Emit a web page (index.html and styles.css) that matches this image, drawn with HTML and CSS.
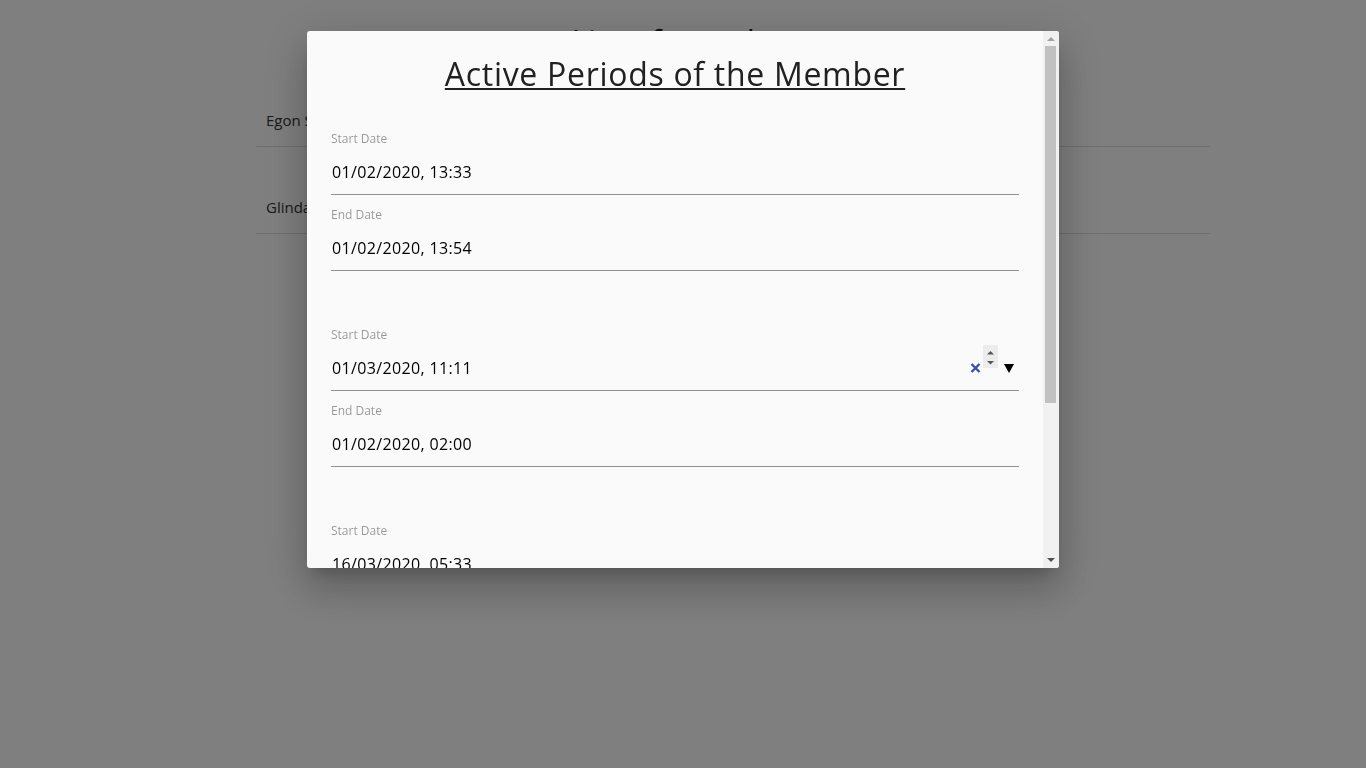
FILE: index.html
```html
<!DOCTYPE html>
<html lang="en">
<head>
<meta charset="utf-8">
<title>Active Periods of the Member</title>
<link rel="stylesheet" href="styles.css">
</head>
<body>
<div class="page">
  <h1 class="page-title">List of members</h1>
  <ul class="member-list">
    <li class="member-row">Egon Spengler</li>
    <li class="member-row">Glinda Southgood</li>
  </ul>
</div>

<div class="overlay">
  <div class="dialog">
    <div class="dialog-body">
      <h2 class="dialog-title">Active Periods of the Member</h2>

      <div class="period">
        <div class="field">
          <div class="field-label">Start Date</div>
          <div class="field-input"><span class="value">01/02/2020, 13:33</span></div>
        </div>
        <div class="field">
          <div class="field-label">End Date</div>
          <div class="field-input"><span class="value">01/02/2020, 13:54</span></div>
        </div>
      </div>

      <div class="period">
        <div class="field">
          <div class="field-label">Start Date</div>
          <div class="field-input">
            <span class="value">01/03/2020, 11:11</span>
            <svg class="clear-icon" width="11" height="10" viewBox="0 0 11 10"><path d="M1.5 1 L9.5 9 M9.5 1 L1.5 9" stroke="#3b4fa6" stroke-width="2.4" fill="none"/></svg>
            <span class="spin">
              <svg width="15" height="23" viewBox="0 0 15 23"><path d="M4 9.5 L7.5 6 L11 9.5 Z" fill="#555"/><path d="M4 16 L11 16 L7.5 19.5 Z" fill="#555"/></svg>
            </span>
            <svg class="drop-icon" width="10" height="9" viewBox="0 0 10 9"><path d="M0 0 L10 0 L5 9 Z" fill="#000"/></svg>
          </div>
        </div>
        <div class="field">
          <div class="field-label">End Date</div>
          <div class="field-input"><span class="value">01/02/2020, 02:00</span></div>
        </div>
      </div>

      <div class="period">
        <div class="field">
          <div class="field-label">Start Date</div>
          <div class="field-input"><span class="value">16/03/2020, 05:33</span></div>
        </div>
        <div class="field">
          <div class="field-label">End Date</div>
          <div class="field-input"><span class="value">16/03/2020, 08:15</span></div>
        </div>
      </div>
    </div>

    <div class="scrollbar" aria-hidden="true">
      <div class="sb-btn">
        <svg width="16" height="15" viewBox="0 0 16 15"><path d="M4 10 L8 6 L12 10 Z" fill="#a3a3a3"/></svg>
      </div>
      <div class="sb-track"><div class="sb-thumb"></div></div>
      <div class="sb-btn">
        <svg width="16" height="15" viewBox="0 0 16 15"><path d="M4 5 L12 5 L8 9 Z" fill="#505050"/></svg>
      </div>
    </div>
  </div>
</div>
</body>
</html>
```

FILE: styles.css
```css
html, body {
  margin: 0;
  padding: 0;
}
body {
  background: #ffffff;
  font-family: "Open Sans", "Noto Sans", sans-serif;
  color: #333;
  width: 1366px;
  height: 768px;
  overflow: hidden;
}

.page-title {
  margin: 0;
  padding: 22px 0 0 18px;
  height: 38px;
  line-height: 40px;
  font-size: 32px;
  font-weight: 400;
  text-align: center;
  color: #222;
}
.member-list {
  list-style: none;
  margin: 0 0 0 256px;
  padding: 0;
  width: 954px;
}
.member-row {
  padding: 51px 10px 17px;
  line-height: 18px;
  font-size: 15px;
  color: #333;
  border-bottom: 1px solid #dddddd;
}

.overlay {
  position: fixed;
  inset: 0;
  background: rgba(0, 0, 0, 0.5);
  display: flex;
  justify-content: center;
  align-items: flex-start;
  padding-top: 31px;
}

.dialog {
  width: 752px;
  height: 537px;
  background: #fafafa;
  border-radius: 3px;
  overflow: hidden;
  display: flex;
  box-shadow: 0 11px 15px -7px rgba(0,0,0,.2), 0 24px 38px 3px rgba(0,0,0,.14), 0 9px 46px 8px rgba(0,0,0,.12);
}

.dialog-body {
  flex: 1;
  min-width: 0;
  overflow: hidden;
  padding: 23px 24px 0;
}

.scrollbar {
  width: 16px;
  flex: none;
  background: #f1f1f1;
  display: flex;
  flex-direction: column;
}
.sb-btn {
  height: 15px;
  flex: none;
}
.sb-btn svg {
  display: block;
}
.sb-track {
  flex: 1;
  padding: 0 3px 0 2px;
}
.sb-thumb {
  height: 357px;
  background: #c1c1c1;
}

.dialog-title {
  margin: 0 0 36px;
  line-height: 40px;
  height: 40px;
  font-size: 32px;
  font-weight: 400;
  text-align: center;
  color: #212121;
  letter-spacing: 0.7px;
  text-decoration: underline;
  text-decoration-thickness: 2px;
  text-underline-offset: 2px;
}

.period {
  margin-bottom: 55px;
}

.field {
  margin-bottom: 11px;
}
.field-label {
  font-size: 12px;
  line-height: 16px;
  height: 15px;
  padding-top: 1px;
  color: rgba(0, 0, 0, 0.4);
}
.field-input {
  margin-top: 6px;
  padding: 8px 5px 10px 1px;
  line-height: 24px;
  height: 24px;
  font-size: 16px;
  letter-spacing: 0.35px;
  color: #000;
  border-bottom: 1px solid rgba(0, 0, 0, 0.42);
  display: flex;
  align-items: center;
}
.value {
  flex: 1;
}
.clear-icon {
  display: block;
  margin-right: 2px;
}
.spin {
  align-self: flex-start;
  margin-top: -11px;
  width: 15px;
  height: 23px;
  background: #ececec;
}
.spin svg {
  display: block;
}
.drop-icon {
  display: block;
  margin-left: 6px;
}
```
